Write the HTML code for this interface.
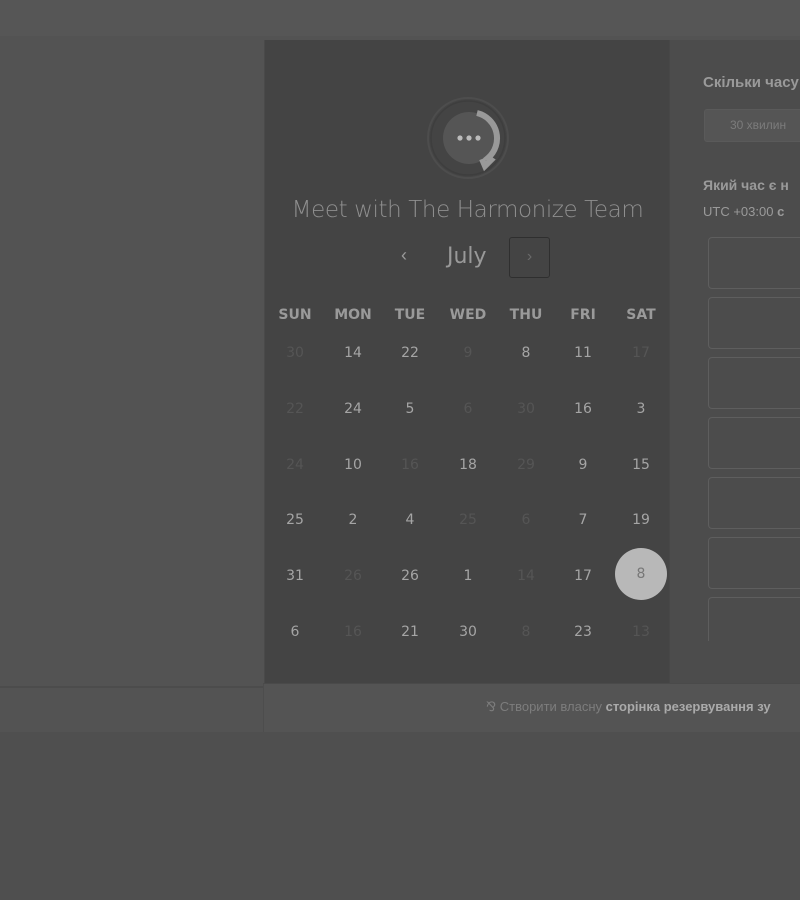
<!DOCTYPE html>
<html><head><meta charset="utf-8"><style>
*{margin:0;padding:0;box-sizing:border-box}
body{width:800px;height:900px;overflow:hidden;background:#4f4f4f;font-family:"Liberation Sans",sans-serif;position:relative}
.top{position:absolute;left:0;top:0;width:800px;height:36px;background:#565656}
.mid{position:absolute;left:0;top:36px;width:800px;height:696px;background:#535353}
.cal{position:absolute;left:264px;top:40px;width:405px;height:643px;background:#444;border-left:1px solid #4a4a4a}
.right{position:absolute;left:669px;top:40px;width:131px;height:643px;background:#4c4c4c;border-left:1px solid #474747}
.foot{position:absolute;left:263px;top:683px;width:537px;height:49px;background:#545454;border-top:1px solid #4a4a4a;border-left:1px solid #4d4d4d}
.below{position:absolute;left:0;top:686px;width:263px;height:2px;background:#4c4c4c}
.title{position:absolute;left:0;width:405px;top:157px;text-align:center;font-size:23px;color:#8f8f8f;font-family:"DejaVu Sans",sans-serif;font-weight:200;letter-spacing:-.4px}
.month{position:absolute;left:182px;top:204px;font-size:22px;color:#999;font-family:"DejaVu Sans",sans-serif}
.prev{position:absolute;left:136px;top:205px;font-size:18px;color:#9a9a9a}
.next{position:absolute;left:244px;top:197px;width:41px;height:41px;border:1px solid #2f2f2f;border-radius:3px;color:#6a6a6a;text-align:center;line-height:38px;font-size:16px}
.d{position:absolute;width:50px;margin-left:-25px;text-align:center;font-size:14px;color:#a5a5a5;font-family:"DejaVu Sans",sans-serif}
.h{font-size:14px;color:#9a9a9a;font-weight:bold}
.dim{color:#555}
.sel{position:absolute;left:350px;top:508px;width:52px;height:52px;border-radius:50%;background:#b8b8b8;color:#777;text-align:center;line-height:52px;font-size:14px;font-family:"DejaVu Sans",sans-serif}
.rt{position:absolute;font-weight:bold;color:#9a9a9a;font-size:15px;white-space:nowrap}
.btn{position:absolute;left:34px;top:69px;width:110px;height:33px;background:#555;border:1px solid #5a5a5a;border-radius:3px;color:#7c7c7c;font-size:12px;line-height:31px;padding-left:25px;white-space:nowrap}
.slot{position:absolute;left:38px;width:100px;height:52px;border:1px solid #5e5e5e;border-radius:4px}
</style></head><body>
<div class="top"></div><div class="mid"></div>
<div class="cal">
<svg style="position:absolute;left:160px;top:55px" width="86" height="86" viewBox="0 0 86 86">
<circle cx="43" cy="43" r="40" fill="none" stroke="#4d4d4d" stroke-width="2"/>
<circle cx="43" cy="43" r="37" fill="none" stroke="#3e3e3e" stroke-width="1.5"/>
<circle cx="44" cy="43" r="26" fill="#555"/>
<path d="M52 18 A26 26 0 0 1 63 63 L66 65 L60 71 L57 64" fill="none" stroke="#999" stroke-width="6"/>
<circle cx="35" cy="43" r="2.6" fill="#bbb"/><circle cx="44" cy="43" r="2.6" fill="#bbb"/><circle cx="53" cy="43" r="2.6" fill="#bbb"/>
</svg>
<div class="title">Meet with The Harmonize Team</div>
<div class="prev">‹</div><div class="month">July</div><div class="next">›</div>
<div id="g"></div>
<div class="sel">8</div>
</div>
<div class="right">
<div class="rt" style="left:33px;top:34px">Скільки часу</div>
<div class="btn">30 хвилин</div>
<div class="rt" style="left:33px;top:137px;font-size:14px">Який час є н</div>
<div class="rt" style="left:33px;top:164px;font-size:13px;font-weight:normal">UTC +03:00 <b>с</b></div>
<div class="slot" style="top:197px"></div><div class="slot" style="top:257px"></div><div class="slot" style="top:317px"></div><div class="slot" style="top:377px"></div><div class="slot" style="top:437px"></div><div class="slot" style="top:497px"></div>
<div style="position:absolute;left:38px;top:557px;width:100px;height:44px;border:1px solid #5e5e5e;border-bottom:none;border-radius:4px 4px 0 0"></div>
</div>
<div class="foot"><div style="position:absolute;left:222px;top:15px;font-size:13px;color:#7d7d7d;white-space:nowrap">⅋ Створити власну <b style="color:#aaa">сторінка резервування зу</b></div></div>
<div class="below"></div>
<script>
var xs=[30,88,145,203,261,318,376],ys=[354,410,466,521,577,633];
var hd=["SUN","MON","TUE","WED","THU","FRI","SAT"];
var data=[["30d","14","22","9d","8","11","17d"],["22d","24","5","6d","30d","16","3"],["24d","10","16d","18","29d","9","15"],["25","2","4","25d","6d","7","19"],["31","26d","26","1","14d","17",""],["6","16d","21","30","8d","23","13d"]];
var h="";
for(var i=0;i<7;i++)h+='<div class="d h" style="left:'+xs[i]+'px;top:267px">'+hd[i]+'</div>';
for(var r=0;r<6;r++)for(var c=0;c<7;c++){var v=data[r][c];if(!v)continue;var dm=v.slice(-1)=="d";h+='<div class="d'+(dm?' dim':'')+'" style="left:'+xs[c]+'px;top:'+(ys[r]-49)+'px">'+(dm?v.slice(0,-1):v)+'</div>';}
document.getElementById("g").innerHTML=h;
</script>
</body></html>
